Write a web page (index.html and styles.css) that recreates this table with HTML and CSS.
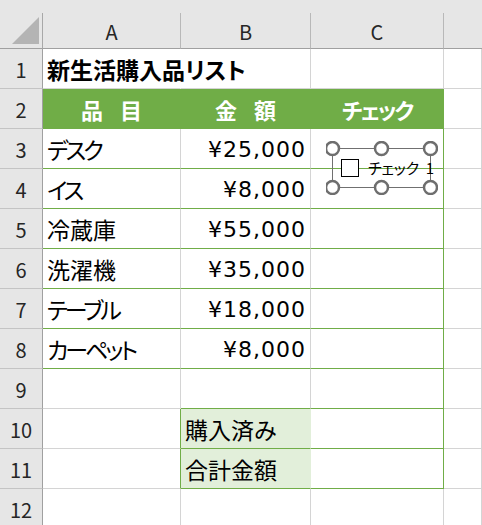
FILE: index.html
```html
<!DOCTYPE html>
<html lang="ja">
<head>
<meta charset="utf-8">
<link rel="stylesheet" href="styles.css">
</head>
<body>
<div class="sheet">
  <div class="band"></div>
  <div class="grid">
    <div class="corner"><svg width="42" height="35" viewBox="0 0 42 35"><polygon points="12,31 39,4 39,31" fill="#b4b4b4"/></svg></div>
    <div class="ch">A</div><div class="ch">B</div><div class="ch">C</div><div class="ch last"></div>

    <div class="rh">1</div><div class="c title">新生活購入品リスト</div><div class="c"></div><div class="c"></div><div class="c"></div>
    <div class="rh">2</div><div class="c hd wide">品 目</div><div class="c hd wide">金 額</div><div class="c hd kana-h">チェック</div><div class="c"></div>

    <div class="rh">3</div><div class="c t kana">デスク</div><div class="c t num">¥25,000</div><div class="c t tr"></div><div class="c"></div>
    <div class="rh">4</div><div class="c t kana">イス</div><div class="c t num">¥8,000</div><div class="c t tr"></div><div class="c"></div>
    <div class="rh">5</div><div class="c t">冷蔵庫</div><div class="c t num">¥55,000</div><div class="c t tr"></div><div class="c"></div>
    <div class="rh">6</div><div class="c t">洗濯機</div><div class="c t num">¥35,000</div><div class="c t tr"></div><div class="c"></div>
    <div class="rh">7</div><div class="c t kana">テーブル</div><div class="c t num">¥18,000</div><div class="c t tr"></div><div class="c"></div>
    <div class="rh">8</div><div class="c t kana">カーペット</div><div class="c t num">¥8,000</div><div class="c t tr"></div><div class="c"></div>

    <div class="rh">9</div><div class="c"></div><div class="c gb"></div><div class="c gb"></div><div class="c"></div>
    <div class="rh">10</div><div class="c gr"></div><div class="c lab">購入済み</div><div class="c val"></div><div class="c"></div>
    <div class="rh">11</div><div class="c gr"></div><div class="c lab">合計金額</div><div class="c val"></div><div class="c"></div>
    <div class="rh">12</div><div class="c"></div><div class="c"></div><div class="c"></div><div class="c"></div>
  </div>

  <div class="ctrl">
    <svg class="frame" width="112" height="54" viewBox="0 0 112 54">
      <rect x="6.5" y="7.5" width="98" height="39" fill="none" stroke="#707070" stroke-width="1"/>
      <circle cx="6.5" cy="7.5" r="6.5" fill="#fff" stroke="#6e6e6e" stroke-width="2.5"/>
      <circle cx="55.5" cy="7.5" r="6.5" fill="#fff" stroke="#6e6e6e" stroke-width="2.5"/>
      <circle cx="104.5" cy="7.5" r="6.5" fill="#fff" stroke="#6e6e6e" stroke-width="2.5"/>
      <circle cx="6.5" cy="46.5" r="6.5" fill="#fff" stroke="#6e6e6e" stroke-width="2.5"/>
      <circle cx="55.5" cy="46.5" r="6.5" fill="#fff" stroke="#6e6e6e" stroke-width="2.5"/>
      <circle cx="104.5" cy="46.5" r="6.5" fill="#fff" stroke="#6e6e6e" stroke-width="2.5"/>
    </svg>
    <div class="label"><span class="box"></span><span class="ltext">チェック 1</span></div>
  </div>
</div>
</body>
</html>
```
FILE: styles.css
```css
html, body {
  margin: 0;
  padding: 0;
  background: #fff;
}
body {
  font-family: "Noto Sans CJK JP", "Noto Sans", sans-serif;
  color: #000;
}
.sheet {
  position: relative;
  width: 482px;
  height: 525px;
  overflow: hidden;
}
.band {
  height: 13px;
  background: #e6e6e6;
}
.grid {
  display: grid;
  grid-template-columns: 43px 138px 130px 133px 1fr;
  grid-template-rows: 36px repeat(12, 40px);
}
.grid > div {
  box-sizing: border-box;
  border-right: 1px solid #d4d4d4;
  border-bottom: 1px solid #d4d4d4;
  display: flex;
  align-items: center;
  white-space: nowrap;
}
.grid > .corner {
  background: #e6e6e6;
  border-right: 1px solid #a8a8a8;
  border-bottom: 1px solid #a0a0a0;
  align-items: flex-start;
}
.corner svg { display: block; }
.grid > .ch {
  background: #e6e6e6;
  border-right: 1px solid #b8b8b8;
  border-bottom: 1px solid #a0a0a0;
  justify-content: center;
  font-size: 20px;
  color: #262626;
  padding-top: 2px;
}
.grid > .ch.last { border-right: none; }
.grid > .rh {
  background: #e6e6e6;
  border-right: 1px solid #a0a0a0;
  border-bottom: 1px solid #c4c4c4;
  justify-content: center;
  font-size: 20px;
  color: #262626;
  padding-top: 1px;
}
.c {
  font-size: 23px;
  padding: 1px 4px 0 4px;
  font-feature-settings: "palt";
}
.kana { letter-spacing: -3px; }
.title {
  font-weight: bold;
  font-size: 23px;
}
.grid > .title { border-right-color: transparent; }
.grid > .hd {
  background: #70ad47;
  border-right-color: #70ad47;
  border-bottom-color: #70ad47;
  color: #fff;
  font-weight: bold;
  font-size: 22px;
  justify-content: center;
}
.kana-h { letter-spacing: -2px; }
.wide { word-spacing: 12px; }
.grid > .t { border-bottom-color: #70ad47; }
.grid > .tr { border-right-color: #70ad47; }
.num {
  justify-content: flex-end;
  font-family: "DejaVu Sans", sans-serif;
  font-size: 22px;
  letter-spacing: 1px;
}
.grid > .num { padding-right: 4px; }
.grid > .gb { border-bottom-color: #70ad47; }
.grid > .gb + .gb { border-right-color: #70ad47; }
.grid > .gr { border-right-color: #70ad47; }
.grid > .lab {
  background: #e2efda;
  border-right-color: #e2efda;
  border-bottom-color: #70ad47;
}
.grid > .val {
  border-right-color: #70ad47;
  border-bottom-color: #70ad47;
}
.ctrl {
  position: absolute;
  left: 326px;
  top: 141px;
  width: 112px;
  height: 54px;
}
.frame {
  position: absolute;
  left: 0;
  top: 0;
}
.label {
  position: absolute;
  left: 15px;
  top: 18px;
  display: flex;
  align-items: center;
  gap: 9px;
  white-space: nowrap;
}
.box {
  width: 16px;
  height: 16px;
  border: 1px solid #000;
  background: #fff;
}
.ltext {
  font-size: 15px;
  line-height: 18px;
  color: #000;
  font-feature-settings: "palt";
  word-spacing: 3px;
}
```
